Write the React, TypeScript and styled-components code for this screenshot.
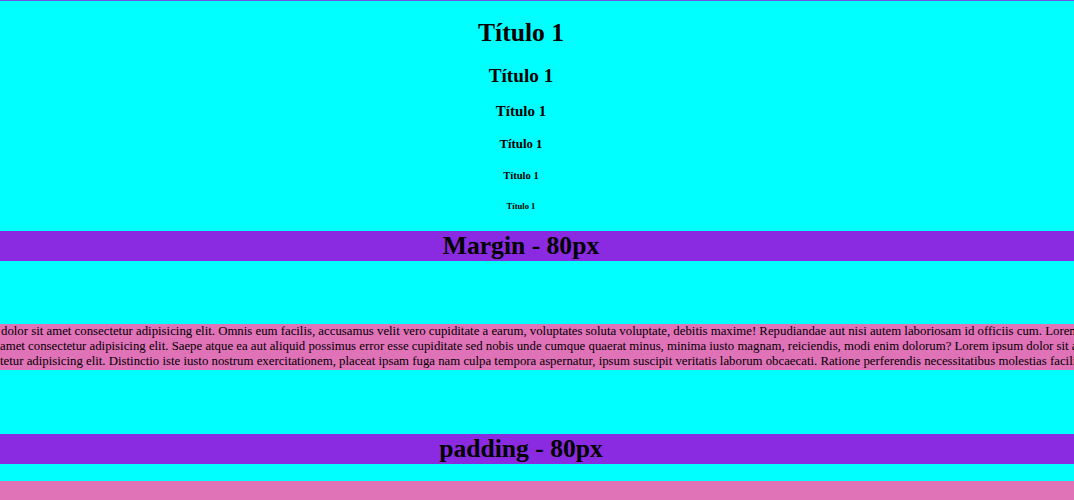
import React from "react";
import styled, { createGlobalStyle, css } from "styled-components";

const GlobalStyle = createGlobalStyle`
  html, body {
    margin: 0;
    padding: 0;
    background: #00ffff;
  }
  body {
    font-family: "Liberation Serif", "Times New Roman", serif;
    font-size: 12.8px;
    color: #000;
  }
`;

const Page = styled.div`
  border-top: 1px solid #6e55e8;
  background: #00ffff;
  min-height: 499px;
  overflow: hidden;
`;

type Level = 1 | 2 | 3 | 4 | 5 | 6;

const sizes: Record<Level, { size: number; margin: number }> = {
  1: { size: 2, margin: 0.67 },
  2: { size: 1.5, margin: 0.83 },
  3: { size: 1.17, margin: 1 },
  4: { size: 1, margin: 1.33 },
  5: { size: 0.83, margin: 1.67 },
  6: { size: 0.67, margin: 2.33 },
};

const Heading = styled.div<{ $level: Level; $band?: boolean }>`
  font-family: "Liberation Serif", "Times New Roman", serif;
  font-weight: bold;
  text-align: center;
  padding-right: 32px;
  ${({ $level }) => css`
    font-size: ${sizes[$level].size}em;
    margin: ${sizes[$level].margin}em 0;
  `}
  ${({ $band }) =>
    $band &&
    css`
      background: #8a2be2;
    `}
`;

const Paragraph = styled.div`
  background: #e072b8;
  margin: 63px 0 64px;
  line-height: 15.2px;
  font-size: 12.8px;
  white-space: nowrap;
  overflow: hidden;
`;

const Line = styled.div<{ $indent?: number }>`
  display: block;
  padding-left: ${({ $indent }) => $indent ?? 0}px;
`;

const PaddedBlock = styled.div`
  background: #e072b8;
  padding: 64px 0;
`;

const lines = [
  { text: "dolor sit amet consectetur adipisicing elit. Omnis eum facilis, accusamus velit vero cupiditate a earum, voluptates soluta voluptate, debitis maxime! Repudiandae aut nisi autem laboriosam id officiis cum. Lorem ipsum", indent: 1 },
  { text: "amet consectetur adipisicing elit. Saepe atque ea aut aliquid possimus error esse cupiditate sed nobis unde cumque quaerat minus, minima iusto magnam, reiciendis, modi enim dolorum? Lorem ipsum dolor sit amet", indent: 0 },
  { text: "tetur adipisicing elit. Distinctio iste iusto nostrum exercitationem, placeat ipsam fuga nam culpa tempora aspernatur, ipsum suscipit veritatis laborum obcaecati. Ratione perferendis necessitatibus molestias facilis", indent: 0 },
];

export default function App() {
  const levels: Level[] = [1, 2, 3, 4, 5, 6];
  return (
    <>
      <GlobalStyle />
      <Page>
        {levels.map((l) => (
          <Heading key={l} $level={l}>
            Título 1
          </Heading>
        ))}
        <Heading $level={1} $band>
          Margin - 80px
        </Heading>
        <Paragraph>
          {lines.map((l, i) => (
            <Line key={i} $indent={l.indent}>
              {l.text}
            </Line>
          ))}
        </Paragraph>
        <Heading $level={1} $band>
          padding - 80px
        </Heading>
        <PaddedBlock />
      </Page>
    </>
  );
}
